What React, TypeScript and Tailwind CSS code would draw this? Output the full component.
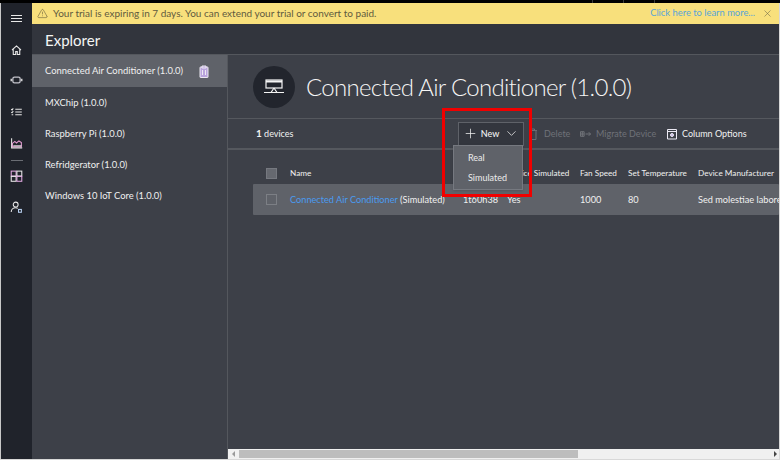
import React from 'react';
import { ChevronDown, Plus, TriangleAlert, X } from 'lucide-react';

const models = [
  'Connected Air Conditioner (1.0.0)',
  'MXChip (1.0.0)',
  'Raspberry Pi (1.0.0)',
  'Refridgerator (1.0.0)',
  'Windows 10 IoT Core (1.0.0)',
];

const RailIcon = ({ children, className = '' }: { children: React.ReactNode; className?: string }) => (
  <svg viewBox="0 0 16 16" fill="none" stroke="#e8e8e8" strokeWidth="1.3" className={`h-4 w-[13px] ${className}`}>
    {children}
  </svg>
);

const Rail = () => (
  <div className="w-[32px] shrink-0 border-l border-[#c8c8c8] bg-[#20232b] flex flex-col items-center pt-[8px]">
    <svg width="13" height="16" viewBox="0 0 13 16" fill="none" stroke="#e8e8e8" strokeWidth="1">
      <path d="M1 4.500h11M1 7.500h11M1 10.500h11" />
    </svg>
    <RailIcon className="mt-[15px]">
      <path d="M2.500 8 8 3l5.500 5M4 7v6.500h3V10h2v3.500h3V7" />
    </RailIcon>
    <RailIcon className="mt-[14px]">
      <rect x="3.500" y="4.500" width="9" height="7" rx="2" strokeWidth="1.600" stroke="#c4c4cc" />
      <path d="M1.500 6.500v3M14.500 6.500v3" strokeWidth="1.600" />
    </RailIcon>
    <RailIcon className="mt-[16px]">
      <path d="M6.500 4.500h8M6.500 8h8M6.500 11.500h8M1.500 4.500l1 1 1.500-2M1.500 8l1 1 1.500-2M2 11.500h2" />
    </RailIcon>
    <RailIcon className="mt-[15px]">
      <path d="M2 2v12h13" />
      <path d="M3 8.500 6 6l2 2 3-2.500 3 2v5H3z" stroke="#e39ad0" />
      <path d="M4 11.500h10" />
    </RailIcon>
    <div className="w-[12px] h-px bg-[#6a6d74] mt-[9px]" />
    <RailIcon className="mt-[7px]">
      <rect x="1.500" y="2" width="6" height="6" stroke="#e0a8e0" />
      <rect x="8.500" y="2" width="6" height="6" />
      <rect x="1.500" y="8.500" width="6" height="6" />
      <rect x="8.500" y="8.500" width="6" height="6" stroke="#e0a8e0" />
    </RailIcon>
    <RailIcon className="mt-[15px]">
      <circle cx="7" cy="5" r="3" />
      <path d="M1.500 14c0-3 2.500-5 5.500-5 1 0 2 .3 2.500 .8" />
      <rect x="10.500" y="11" width="3.500" height="3.500" stroke="#b8d0f0" />
    </RailIcon>
  </div>
);

const Sidebar = () => (
  <div className="w-[195px] shrink-0 bg-[#3d4048] border-r border-[#54575d] box-content">
    {models.map((name, i) => (
      <div
        key={name}
        className={`pl-[13px] pr-[18px] pt-[1px] flex items-center justify-between text-[9.4px] text-[#f0f0f0] whitespace-nowrap ${i === 0 ? 'bg-[#5f6269] h-[32px]' : 'h-[31px]'}`}
      >
        <span>{name}</span>
        {i === 0 && (
          <svg width="10" height="13" viewBox="0 0 10 13" fill="#b9a4dc" stroke="#ece8f2" strokeWidth="1">
            <rect x="1" y="2" width="8" height="10.500" rx="0.500" />
            <path d="M3 1h4v2H3zM3.500 5v5M6.500 5v5" />
          </svg>
        )}
      </div>
    ))}
  </div>
);

const Toolbar = () => (
  <div className="h-[29px] border-t border-b-2 border-[#55585e] flex items-center text-[9px] pl-[28px] box-content whitespace-nowrap">
    <span className="text-[#f2f2f2] w-[202px] shrink-0">
      <span className="font-bold text-[10px]">1</span> devices
    </span>
    <button className="w-[66px] h-[24px] shrink-0 border border-[#5f6269] bg-[#33363e] flex items-center justify-center text-[#f2f2f2] font-medium">
      <Plus size={15} strokeWidth={1.2} />
      <span className="ml-[3px] mr-[5px]">New</span>
      <ChevronDown size={15} strokeWidth={1.2} />
    </button>
    <svg width="10" height="12" viewBox="0 0 10 12" fill="none" stroke="#6c6f75" className="ml-[4px] shrink-0">
      <path d="M1 2.500h8M2 2.500v9h6v-9M3.500 1h3v1.500" />
    </svg>
    <span className="ml-[6px] w-[26px] text-[#6f7278]">Delete</span>
    <svg width="11" height="8" viewBox="0 0 12 8" fill="none" stroke="#74777d" className="ml-[10px] shrink-0">
      <path d="M.5 1.500h4v5h-4zM.5 4h4M2.500 1.500v5M6 4h5.500M9.500 2l2 2-2 2" />
    </svg>
    <span className="ml-[5px] w-[61px] text-[#6f7278]">Migrate Device</span>
    <svg width="12" height="12" viewBox="0 0 12 12" fill="none" stroke="#eceaf4" className="ml-[9px] shrink-0">
      <path d="M1.500 1.500h9v9.500h-9zM1.500 3.500h9" />
      <circle cx="6" cy="7" r="1.500" fill="#c9b6e6" />
    </svg>
    <span className="ml-[4px] text-[#f2f2f2]">Column Options</span>
  </div>
);

const Table = () => (
  <div className="flex-1 pt-[12px] pl-[25px] text-[#f0f0f0] overflow-hidden">
    <div className="h-[22px] flex items-center text-[8.2px] whitespace-nowrap">
      <div className="w-[37px] shrink-0 pl-[13px]">
        <div className="w-[11px] h-[11px] bg-[#666970] border border-[#767980]" />
      </div>
      <span className="w-[173px] shrink-0">Name</span>
      <span className="w-[44px] shrink-0">Device Id</span>
      <span className="w-[73px] shrink-0">Device Simulated</span>
      <span className="w-[48px] shrink-0">Fan Speed</span>
      <span className="w-[70px] shrink-0">Set Temperature</span>
      <span className="shrink-0">Device Manufacturer</span>
    </div>
    <div className="h-[31px] flex items-center text-[9.2px] bg-[#5f6269] whitespace-nowrap rounded-[1px]">
      <div className="w-[37px] shrink-0 pl-[13px]">
        <div className="w-[11px] h-[11px] border border-[#7c7f85]" />
      </div>
      <span className="w-[173px] shrink-0">
        <span className="text-[#4a9bf0]">Connected Air Conditioner</span> (Simulated)
      </span>
      <span className="w-[44px] shrink-0">1t60h38</span>
      <span className="w-[73px] shrink-0">Yes</span>
      <span className="w-[48px] shrink-0">1000</span>
      <span className="w-[70px] shrink-0">80</span>
      <span className="shrink-0">Sed molestiae labore</span>
    </div>
  </div>
);

const Scrollbar = () => (
  <div className="h-[10px] bg-[#f0f0f0] flex items-center">
    <span className="w-[11px] flex justify-center">
      <span className="border-y-[3px] border-r-[3px] border-y-transparent border-r-[#9a9a9a]" />
    </span>
    <div className="w-[339px] h-[8px] bg-[#bdbdbd]" />
    <span className="flex-1" />
    <span className="w-[8px] flex justify-center">
      <span className="border-y-[3px] border-l-[3px] border-y-transparent border-l-[#444]" />
    </span>
  </div>
);

export default function App() {
  return (
    <div className="relative w-[780px] h-[460px] overflow-hidden bg-[#3d4048] flex flex-col font-['Lato','Open_Sans',sans-serif]">
      <div className="h-[3px] bg-black shrink-0 flex pl-[592px] gap-[30px]">
        <div className="w-px bg-[#3a3a3a]" />
        <div className="w-px bg-[#3a3a3a]" />
        <div className="w-px bg-[#3a3a3a]" />
      </div>
      <div className="flex-1 flex min-h-0 border-r border-b border-[#d8d8d8]">
        <Rail />
        <div className="flex-1 min-w-0 flex flex-col">
          <div className="h-[21px] shrink-0 bg-[#f8e07c] flex items-center pl-[5px] pr-[6px] text-[10px]">
            <TriangleAlert size={11} strokeWidth={1.2} className="text-[#5a5236]" />
            <span className="ml-[5px] text-[#5f5a3e]">
              Your trial is expiring in 7 days. You can extend your trial or convert to paid.
            </span>
            <span className="ml-auto text-[#58a5d8] text-[9.4px]">Click here to learn more...</span>
            <X size={11} strokeWidth={1.2} className="ml-[7px] text-[#6b6448]" />
          </div>
          <div className="h-[31px] pt-[2px] shrink-0 bg-[#32353d] border-b border-[#54575d] flex items-center pl-[13px] text-[15px] text-[#f5f5f5]">
            Explorer
          </div>
          <div className="flex-1 flex min-h-0">
            <Sidebar />
            <div className="flex-1 min-w-0 flex flex-col">
              <div className="h-[63px] shrink-0 flex items-center pl-[25px]">
                <div className="w-[42px] h-[42px] rounded-full bg-[#22252d] flex items-center justify-center">
                  <svg width="20" height="15" viewBox="0 0 20 15" fill="none" stroke="#f5f5f5" strokeWidth="1.200">
                    <rect x="2" y="1" width="16" height="8" />
                    <path d="M2 2.500h16" strokeWidth="2" />
                    <path d="M10 9l-3 4.500M10 9l3 4.500M0 13.500h20" />
                  </svg>
                </div>
                <span className="ml-[11px] text-[24px] tracking-[-0.7px] font-light text-[#f5f5f5] whitespace-nowrap">
                  Connected Air Conditioner (1.0.0)
                </span>
              </div>
              <Toolbar />
              <Table />
              <Scrollbar />
            </div>
          </div>
        </div>
      </div>

      <div className="absolute left-[453px] top-[145px] w-[70px] h-[45px] bg-[#5f6269] border border-[#767980] text-[#ececec] text-[9px] flex flex-col justify-center pl-[14px] gap-[7px] shadow">
        <span>Real</span>
        <span>Simulated</span>
      </div>
      <div className="absolute left-[442px] top-[108px] w-[90px] h-[89px] border-[3px] border-[#f00000]" />
    </div>
  );
}
